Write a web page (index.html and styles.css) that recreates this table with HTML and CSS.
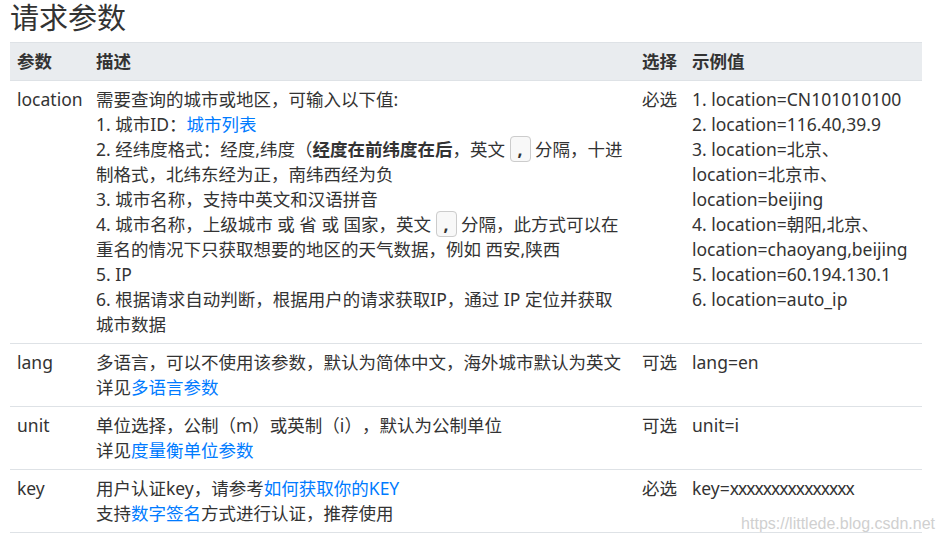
FILE: index.html
```html
<!DOCTYPE html>
<html lang="zh-CN">
<head>
<meta charset="utf-8">
<title>请求参数</title>
<link rel="stylesheet" href="styles.css">
</head>
<body>
<h3 class="title">请求参数</h3>
<table class="params">
  <colgroup>
    <col class="c-name">
    <col class="c-desc">
    <col class="c-req">
    <col class="c-ex">
  </colgroup>
  <thead>
    <tr><th>参数</th><th>描述</th><th>选择</th><th>示例值</th></tr>
  </thead>
  <tbody>
    <tr>
      <td>location</td>
      <td>需要查询的城市或地区，可输入以下值:<br>1. 城市ID：<a href="#">城市列表</a><br>2. 经纬度格式：经度,纬度（<strong>经度在前纬度在后</strong>，英文 <code class="kbd">,</code> 分隔，十进制格式，北纬东经为正，南纬西经为负<br>3. 城市名称，支持中英文和汉语拼音<br>4. 城市名称，上级城市 或 省 或 国家，英文 <code class="kbd">,</code> 分隔，此方式可以在重名的情况下只获取想要的地区的天气数据，例如 西安,陕西<br>5. IP<br>6. 根据请求自动判断，根据用户的请求获取IP，通过 IP 定位并获取城市数据</td>
      <td>必选</td>
      <td>1. location=CN101010100<br>2. location=116.40,39.9<br><span class="seg">3. location=北京、</span><span class="seg">location=北京市、</span><span class="seg">location=beijing</span><br><span class="seg">4. location=朝阳,北京、</span><span class="seg">location=chaoyang,beijing</span><br>5. location=60.194.130.1<br>6. location=auto_ip</td>
    </tr>
    <tr>
      <td>lang</td>
      <td>多语言，可以不使用该参数，默认为简体中文，海外城市默认为英文<br>详见<a href="#">多语言参数</a></td>
      <td>可选</td>
      <td>lang=en</td>
    </tr>
    <tr>
      <td>unit</td>
      <td>单位选择，公制（m）或英制（i），默认为公制单位<br>详见<a href="#">度量衡单位参数</a></td>
      <td>可选</td>
      <td>unit=i</td>
    </tr>
    <tr>
      <td>key</td>
      <td>用户认证key，请参考<a href="#">如何获取你的KEY</a><br>支持<a href="#">数字签名</a>方式进行认证，推荐使用</td>
      <td>必选</td>
      <td>key=<span class="xs">xxxxxxxxxxxxxxx</span></td>
    </tr>
  </tbody>
</table>
<div class="watermark">https://littlede.blog.csdn.net</div>
</body>
</html>
```
FILE: styles.css
```css
html, body {
  margin: 0;
  padding: 0;
}
body {
  padding: 0 10px;
  font-family: "Noto Sans", "Noto Sans CJK SC", sans-serif;
  font-size: 17.5px;
  line-height: 25px;
  color: #333;
  background: #fff;
  position: relative;
  height: 538px;
  overflow: hidden;
  text-spacing-trim: space-all;
}
.title {
  margin: 0 0 6px 0;
  font-size: 29px;
  line-height: 36px;
  font-weight: 400;
  color: #333;
}
.params {
  width: 912px;
  border-collapse: collapse;
  table-layout: fixed;
}
.c-name { width: 79px; }
.c-desc { width: 546px; }
.c-req { width: 50px; }
.c-ex { width: 237px; }
.params th,
.params td {
  padding: 6px 7px;
  text-align: left;
  vertical-align: top;
  border-bottom: 1px solid #dee2e6;
}
.params thead th {
  background: #e9ecef;
  font-weight: 700;
  border-top: 1px solid #dee2e6;
  border-bottom: 1px solid #dee2e6;
}
.params a {
  color: #007bff;
  text-decoration: none;
}
.params strong {
  font-weight: 700;
}
.seg {
  white-space: nowrap;
}
.xs {
  letter-spacing: -1px;
}
.kbd {
  font-family: "Noto Sans", sans-serif;
  font-weight: 700;
  font-size: 17.5px;
  padding: 0 7px;
  border: 1px solid #ccc;
  border-radius: 4px;
  background: #f8f8f8;
  color: #333;
}
.watermark {
  position: absolute;
  right: 10px;
  bottom: 4px;
  font-family: "Liberation Sans", Arial, sans-serif;
  font-size: 16px;
  line-height: 20px;
  color: #d0d0d0;
}
```
